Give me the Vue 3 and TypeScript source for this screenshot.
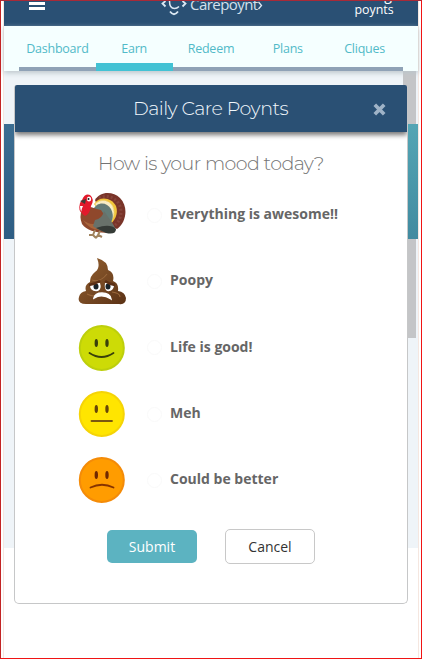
<script setup lang="ts">
import { ref } from 'vue'

interface Mood {
  id: string
  label: string
}

const tabs: string[] = ['Dashboard', 'Earn', 'Redeem', 'Plans', 'Cliques']
const activeTab = ref('Earn')

const moods: Mood[] = [
  { id: 'turkey', label: 'Everything is awesome!!' },
  { id: 'poop', label: 'Poopy' },
  { id: 'good', label: 'Life is good!' },
  { id: 'meh', label: 'Meh' },
  { id: 'sad', label: 'Could be better' },
]
const selected = ref<string | null>(null)
</script>

<template>
  <div class="frame">
    <div class="screen">
      <header class="topbar">
        <svg class="burger" width="16" height="10" viewBox="0 0 16 10">
          <path d="M0 1h16v3H0zM0 6h16v3H0z" fill="#fff" />
        </svg>
        <div class="brand">
          <svg width="27" height="15" viewBox="0 0 27 15" fill="none" stroke="#dce8f3" stroke-width="1.8">
            <path d="M4.500 0L1.500 2.500L4.500 5.500M21.500 0L24.500 2.500L21.500 5.500M9 10.500Q13 16 17 10.500" />
            <path d="M8.500 0Q8.500 7.500 13.500 7.500Q16 7.500 18 5.500" stroke-width="1.5" />
          </svg>
          <span class="brand-name">Carepoynt</span>
          <svg class="brand-end" width="5" height="10" viewBox="0 0 5 10" fill="none" stroke="#dce8f3" stroke-width="1.3">
            <path d="M.5 1L3.500 4.500L.5 8" />
          </svg>
        </div>
        <div class="points"><span>g</span><span>poynts</span></div>
      </header>
      <nav class="tabs">
        <a
          v-for="tab in tabs"
          :key="tab"
          class="tab"
          :class="{ active: tab === activeTab }"
          @click="activeTab = tab"
        ><span>{{ tab }}</span></a>
      </nav>
      <main class="page">
        <div class="banner"></div>
        <div class="scrollbar"></div>
      </main>
    </div>

    <section class="modal">
      <div class="modal-head">
        <h1>Daily Care Poynts</h1>
        <svg class="close" width="13" height="13" viewBox="0 0 13 13">
          <path d="M1.800 1.800L11.200 11.200M11.200 1.800L1.800 11.200" stroke="#9fb3c7" stroke-width="3.7" />
        </svg>
      </div>
      <h2>How is your mood today?</h2>
      <div class="moods">
        <div v-for="mood in moods" :key="mood.id" class="mood" @click="selected = mood.id">
          <svg v-if="mood.id === 'turkey'" width="48" height="48" viewBox="0 -1 48 48">
            <path d="M17 8C22-1 35-1 42 6C51 15 48 31 39 37L26 31Z" fill="#793429" />
            <path d="M21 6C31 1 43 8 43 20C43 27 39 32 36 34" fill="none" stroke="#87443a" stroke-width="3" stroke-dasharray="2 2" />
            <path d="M16 12C22 3 34 6 38 14C41 22 36 30 31 33Z" fill="#f1c43b" />
            <path d="M17 12C23 6 32 8 35 15C38 23 34 29 30 32Z" fill="#f8edc5" stroke="#f0d577" stroke-dasharray="2 1" />
            <path d="M15 18C19 9 29 10 33 17C37 25 34 31 28 35Z" fill="#647b76" />
            <path d="M4 18C10 12 16 17 23 18C27 25 35 31 37 40C23 42 10 40 4 32Q1 24 4 18Z" fill="#8f482c" />
            <path d="M5 28Q18 38 25 23L31 31L23 38Q11 38 5 28Z" fill="#a9653b" />
            <path d="M17 28Q24 27 26 19L33 29Q36 33 38 38L26 40Q17 36 15 34Z" fill="#68716a" />
            <path d="M18 36Q32 31 38 37Q38 43 28 41Z" fill="#353b37" />
            <path d="M4 8Q7 1 12 3Q17 7 13 14Q12 22 7 24Q1 21 5 14L2 14Q2 18 4 21Q0 19 2 11Z" fill="#e2192b" />
            <path d="M8 7L2 9L7 12Z" fill="#3c3d36" />
            <ellipse cx="11" cy="7" rx="2.200" ry="2.500" fill="#fff" />
            <circle cx="10.500" cy="7" r="1" fill="#151515" />
            <path d="M17 38L15 43L11 43M15 43L18 46M22 39L20 43L24 45M20 43L18 46" fill="none" stroke="#a1845e" stroke-width="2" />
          </svg>
          <svg v-else-if="mood.id === 'poop'" width="48" height="48" viewBox="0 -1 48 48">
            <defs>
              <linearGradient id="poop" x1="0" y1="0" x2="1" y2="1">
                <stop offset="0" stop-color="#94602f" />
                <stop offset=".5" stop-color="#784a24" />
                <stop offset="1" stop-color="#5b3215" />
              </linearGradient>
            </defs>
            <path d="M19 0Q30 3 30 12Q37 15 35 23Q41 25 40 33Q47 34 48 40Q48 47 41 46H8Q-1 46 1 39Q2 34 8 33Q6 27 12 24Q12 18 17 14Q23 10 19 0Z" fill="url(#poop)" />
            <path d="M14 22Q22 25 29 16M9 36Q15 39 18 37M34 34Q42 35 42 39" fill="none" stroke="#98663a" stroke-width="1.2" />
            <path d="M12 27Q17 24 22 25Q24 31 20 33Q12 34 12 27ZM27 25Q33 24 36 28Q35 34 29 33Q26 31 27 25Z" fill="#fff" />
            <ellipse cx="18" cy="28.500" rx="2.500" ry="3" fill="#1a2329" />
            <ellipse cx="30" cy="28.500" rx="2.500" ry="3" fill="#1a2329" />
            <path d="M11 27Q17 26 22 23M27 23Q31 26 37 27" fill="none" stroke="#5c3016" stroke-width="2.500" />
            <path d="M16 40Q17 35 24 35Q32 35 33 41Q24 35 16 40Z" fill="#fff" stroke="#fff" stroke-width="1.500" />
          </svg>
          <svg v-else width="48" height="48" viewBox="0 0 48 48" :class="['face', mood.id]">
            <circle class="skin" cx="23.800" cy="24" r="22" />
            <ellipse class="eye" cx="18.300" cy="19" rx="1.700" ry="4" />
            <ellipse class="eye" cx="29" cy="19" rx="1.700" ry="4" />
            <path v-if="mood.id === 'good'" class="mouth" d="M11.500 29Q23.500 37 35.500 29" />
            <path v-else-if="mood.id === 'meh'" class="mouth" d="M13.500 31H34" />
            <path v-else class="mouth" d="M12.500 31.500Q24 26 35.500 31.500" />
          </svg>
          <i class="radio"></i>
          <span class="label">{{ mood.label }}</span>
        </div>
      </div>
      <div class="actions">
        <button class="submit">Submit</button>
        <button class="cancel">Cancel</button>
      </div>
    </section>
  </div>
</template>

<style>
body { margin: 0; background: #fff; }
</style>

<style scoped>
* { box-sizing: border-box; }
.frame {
  position: relative;
  width: 422px;
  height: 659px;
  overflow: hidden;
  border: 1px solid #f01414;
  border-left-color: #c32424;
  border-top-color: #a82a38;
  background: #fff;
  padding: 0 2px 0 3px;
  font-family: "Open Sans", sans-serif;
}
.screen { width: 414px; height: 657px; background: #fff; box-shadow: 0 0 0 1px #f5e7e0; }
.topbar {
  display: flex;
  height: 25px;
  overflow: hidden;
  background: #2a5074;
  color: #fff;
}
.burger { margin: 0 0 0 25px; }
.brand { display: flex; margin-left: 116px; }
.brand-name {
  margin: -7px 0 0 2px;
  font: 400 15px/20px "Open Sans", sans-serif;
  letter-spacing: -.55px;
  color: #d3e0ec;
}
.points {
  display: flex;
  flex-direction: column;
  align-items: center;
  gap: 1px;
  width: 40px;
  margin: -13px 24px 0 auto;
  font: 500 12.4px/14px "Open Sans", sans-serif;
}
.points span:first-child { margin-left: 28px; font-size: 14px; }
.tabs {
  position: relative;
  z-index: 1;
  display: flex;
  height: 45px;
  padding: 0 15px;
  background: #f5ffff;
  box-shadow: 0 2px 5px #bcc6cc;
}
.tab {
  display: flex;
  flex-direction: column;
  align-items: center;
  justify-content: space-between;
  width: 76.8px;
  padding-top: 14px;
  color: #51bac8;
  font-size: 12.5px;
  letter-spacing: -.25px;
  line-height: 18px;
}
.tab::after { content: ""; width: 100%; height: 4px; background: #8fa2b6; }
.tab.active::after { height: 8px; background: #42c2d4; }
.page {
  display: grid;
  grid-template-columns: 1fr 13px 2px;
  grid-template-rows: 53px 115px 99px 1fr;
  height: 477px;
  background: #eff4f8;
}
.banner {
  grid-column: 1 / 4;
  grid-row: 2;
  background: linear-gradient(#ffffff0c, #1e3c6438), linear-gradient(90deg, #32668c 0, #32668c 15px, #4ba1b1 400px);
}
.scrollbar {
  grid-column: 2;
  grid-row: 1 / 4;
  background: #c4c5c7;
  clip-path: polygon(0 0, 100% 0, 100% 53px, 0 53px, 0 168px, 100% 168px, 100% 100%, 0 100%);
}
.modal {
  position: absolute;
  z-index: 2;
  left: 13px;
  top: 84px;
  width: 394px;
  height: 519px;
  background: #fff;
  border: 1px solid #c6c7c8;
  border-top: 0;
  border-radius: 3px 3px 5px 5px;
}
.modal-head {
  display: flex;
  align-items: center;
  height: 47px;
  padding: 0 21px 0 118px;
  background: #2a5074;
  border-radius: 2px 2px 0 0;
  box-shadow: 0 3px 5px #777;
  clip-path: inset(0 0 -12px 0);
}
h1, h2 { margin: 0; font-family: Montserrat, "Open Sans", sans-serif; font-weight: 300; white-space: nowrap; }
h1 { color: #f1f7fc; font-size: 19px; line-height: 24px; letter-spacing: -.5px; }
.close { margin: 2px 0 0 auto; }
h2 { margin: 20px 0 0 83px; color: #747474; font-size: 19px; line-height: 24px; letter-spacing: -.57px; }
.moods { display: flex; flex-direction: column; margin-top: 6px; }
.mood { display: flex; align-items: center; height: 66.3px; padding-left: 63px; }
.radio { width: 15px; height: 15px; margin: 0 8px 0 21px; border: 1px solid #fafafa; border-radius: 50%; }
.label { margin-bottom: 2px; color: #666; font-size: 14px; font-weight: 700; line-height: 20px; white-space: nowrap; }
.skin { stroke-width: 2; }
.good .skin { fill: #cddb06; stroke: #bdcf0c; }
.good .eye { fill: #39400b; }
.good .mouth { stroke: #39400b; }
.meh .skin { fill: #ffe500; stroke: #f5d406; }
.meh .eye { fill: #664508; }
.meh .mouth { stroke: #7a5810; }
.sad .skin { fill: #ff9c00; stroke: #f48b08; }
.sad .eye { fill: #702800; }
.sad .mouth { stroke: #863400; }
.mouth { fill: none; stroke-width: 1.8; stroke-linecap: round; }
.actions { display: flex; align-items: center; gap: 28px; margin: 16px 0 0 92px; height: 35px; }
button { width: 90px; padding: 0; font: 400 14px/20px "Open Sans", sans-serif; border-radius: 5px; }
.submit { height: 33px; border: 0; background: #5cb3c1; color: #fff; font-weight: 500; }
.cancel { height: 35px; border: 1px solid #c8c8c8; background: #fff; color: #333; }
</style>
